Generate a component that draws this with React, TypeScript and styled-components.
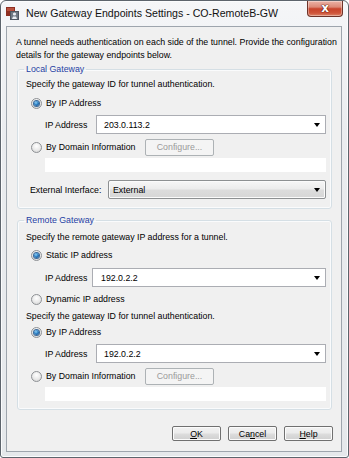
import React from 'react';
import styled, {createGlobalStyle, css} from 'styled-components';

const FONT = '8.8px';

const GlobalStyle = createGlobalStyle`
  html, body {
    margin: 0;
    padding: 0;
    background: #ffffff;
  }
  body {
    font-family: "Liberation Sans", Arial, sans-serif;
    color: #000;
  }
`

const Window = styled.div`
  width: 349px;
  height: 458px;
  box-sizing: border-box;
  border: 1px solid #5d646c;
  border-radius: 6px 6px 3px 3px;
  background: linear-gradient(180deg, #f5f6f8 0%, #eaecef 30%, #e5e8eb 100%);
  box-shadow: inset 0 0 0 1px #fbfcfd;
  display: flex;
  flex-direction: column;
  overflow: hidden;
`

const TitleBar = styled.div`
  height: 25px;
  flex-shrink: 0;
  display: flex;
  align-items: flex-start;
`

const TitleIcon = styled.svg`
  width: 13px;
  height: 13px;
  margin: 6px 0 0 5px;
  flex-shrink: 0;
`

const TitleText = styled.div`
  margin: 6px 0 0 7px;
  font-size: 10.6px;
  line-height: 13px;
  color: #111;
  white-space: nowrap;
`

const CloseButton = styled.div`
  margin-left: auto;
  margin-right: 5px;
  width: 36px;
  height: 16px;
  box-sizing: border-box;
  border: 1px solid #6e3329;
  border-top: none;
  border-radius: 0 0 4px 4px;
  background: linear-gradient(180deg, #ebb3a6 0%, #dc8a78 40%, #c8442c 52%, #cf553a 80%, #dc866b 100%);
  box-shadow: inset 0 0 0 1px rgba(255, 255, 255, 0.35);
  display: flex;
  align-items: center;
  justify-content: center;
  color: #fff;
  font-family: "DejaVu Sans", sans-serif;
  font-weight: bold;
  font-size: 12px;
  line-height: 1;
  padding-bottom: 2px;
  text-shadow: 0 0 1px #5a1a10, 0 0 1px #5a1a10, 0 0 1px #5a1a10;
`

const Panel = styled.div`
  flex: 1;
  margin: 0 6px 5px 5px;
  border: 1px solid #9ea5ad;
  background: #f0f0f0;
  display: flex;
  flex-direction: column;
`

const Intro = styled.div`
  padding: 9px 9px 0 9px;
  font-size: ${FONT};
  line-height: 13px;
  > span {
    display: block;
    white-space: nowrap;
  }
`

const Group = styled.fieldset<{ $top: number; $bottom: number }>`
  margin: ${p => p.$top}px 9px 0 10px;
  padding: 0 5px ${p => p.$bottom}px 8px;
  border: 1px solid #d5dfe5;
  border-radius: 3px;
  box-shadow: inset 0 0 0 1px #fafbfc;
  min-width: 0;
  display: flex;
  flex-direction: column;
`

const Legend = styled.legend`
  padding: 0 2px;
  margin-left: -2px;
  font-size: ${FONT};
  line-height: 13px;
  color: #1f3fa3;
`

const Text = styled.div<{ $top: number }>`
  margin-top: ${p => p.$top}px;
  font-size: ${FONT};
  line-height: 13px;
  white-space: nowrap;
`

const Row = styled.div<{ $top: number; $indent?: number }>`
  margin-top: ${p => p.$top}px;
  padding-left: ${p => p.$indent ?? 0}px;
  display: flex;
  align-items: center;
  font-size: ${FONT};
  white-space: nowrap;
`

const RadioRow = styled.label<{ $top: number }>`
  margin-top: ${p => p.$top}px;
  height: 16px;
  padding-left: 5px;
  display: flex;
  align-items: center;
  font-size: ${FONT};
  white-space: nowrap;
`

const RadioDot = styled.span<{ $checked?: boolean }>`
  width: 11px;
  height: 11px;
  box-sizing: border-box;
  border-radius: 50%;
  border: 1px solid #8e9195;
  background: radial-gradient(circle at 50% 35%, #ffffff 0%, #e9e9e9 55%, #cfcfcf 100%);
  margin-right: 4px;
  flex-shrink: 0;
  display: flex;
  align-items: center;
  justify-content: center;
  ${p => p.$checked && css`
    &::after {
      content: '';
      width: 5px;
      height: 5px;
      border-radius: 50%;
      background: radial-gradient(circle at 40% 35%, #8fd0f5 0%, #2b7fc4 45%, #133f78 100%);
      box-shadow: 0 0 0 1px #3d6a99;
    }
  `}
`

const RadioLabel = styled.span<{ $width?: number }>`
  display: inline-block;
  width: ${p => (p.$width ? `${p.$width}px` : 'auto')};
`

const FieldLabel = styled.span<{ $width: number }>`
  width: ${p => p.$width}px;
  flex-shrink: 0;
`

const Combo = styled.div<{ $raised?: boolean; $pad: number; $h: number }>`
  flex: 1;
  height: ${p => p.$h}px;
  box-sizing: border-box;
  padding-left: ${p => p.$pad}px;
  padding-right: 5px;
  display: flex;
  align-items: center;
  border: 1px solid #abadb3;
  background: #ffffff;
  ${p => p.$raised && css`
    border-color: #8d9092;
    border-radius: 2px;
    background: linear-gradient(180deg, #f7f7f7 0%, #ececec 45%, #dcdcdc 55%, #d6d6d6 100%);
    box-shadow: inset 0 0 0 1px #fbfbfb;
  `}
  > span:first-child {
    flex: 1;
  }
`

const Arrow = styled.span`
  width: 0;
  height: 0;
  border-left: 3.5px solid transparent;
  border-right: 3.5px solid transparent;
  border-top: 4px solid #000;
`

const ConfigureButton = styled.div`
  width: 69px;
  height: 17px;
  box-sizing: border-box;
  border: 1px solid #adb2b5;
  border-radius: 2px;
  background: #f4f4f4;
  color: #9a9a9a;
  display: flex;
  align-items: center;
  justify-content: center;
  font-size: ${FONT};
`

const BlankField = styled.div<{ $top: number }>`
  margin: ${p => p.$top}px 0 0 19px;
  height: 14px;
  background: #ffffff;
`

const ButtonBar = styled.div`
  margin: 16px 8px 0 0;
  display: flex;
  justify-content: flex-end;
  gap: 7px;
`

const Button = styled.div`
  width: 49px;
  height: 15px;
  box-sizing: border-box;
  border: 1px solid #707070;
  border-radius: 2px;
  background: linear-gradient(180deg, #f2f2f2 0%, #ebebeb 48%, #dddddd 52%, #cfcfcf 100%);
  box-shadow: inset 0 0 0 1px #fbfbfb;
  display: flex;
  align-items: center;
  justify-content: center;
  font-size: ${FONT};
  u {
    text-decoration: underline;
  }
`

function Radio({checked, label, width, top}: { checked?: boolean; label: string; width?: number; top: number }) {
  return (
    <RadioRow $top={top}>
      <RadioDot $checked={checked}/>
      <RadioLabel $width={width}>{label}</RadioLabel>
    </RadioRow>
  )
}

function IpRow({top, labelWidth, value, pad}: { top: number; labelWidth: number; value: string; pad: number }) {
  return (
    <Row $top={top} $indent={19}>
      <FieldLabel $width={labelWidth}>IP Address</FieldLabel>
      <Combo $pad={pad} $h={19}>
        <span>{value}</span>
        <Arrow/>
      </Combo>
    </Row>
  )
}

function DomainRow({top}: { top: number }) {
  return (
    <RadioRow $top={top}>
      <RadioDot/>
      <RadioLabel $width={99}>By Domain Information</RadioLabel>
      <ConfigureButton>Configure...</ConfigureButton>
    </RadioRow>
  )
}

export default function App() {
  return (
    <>
      <GlobalStyle/>
      <Window>
        <TitleBar>
          <TitleIcon viewBox="0 0 13 13">
            <rect x="0" y="0" width="9" height="9" fill="#8e2f22"/>
            <rect x="1" y="1" width="7" height="3" fill="#b9503c"/>
            <rect x="4" y="4" width="9" height="9" fill="#4f5761"/>
            <rect x="5" y="5" width="7" height="7" fill="#6f7883"/>
            <circle cx="8.5" cy="7" r="1.6" fill="#e9eef3"/>
            <path d="M6 12 L7 9.5 L10 9.5 L11 12 Z" fill="#e9eef3"/>
          </TitleIcon>
          <TitleText>New Gateway Endpoints Settings - CO-RemoteB-GW</TitleText>
          <CloseButton>x</CloseButton>
        </TitleBar>
        <Panel>
          <Intro>
            <span>A tunnel needs authentication on each side of the tunnel. Provide the configuration</span>
            <span>details for the gateway endpoints below.</span>
          </Intro>

          <Group $top={1} $bottom={9}>
            <Legend>Local Gateway</Legend>
            <Text $top={2}>Specify the gateway ID for tunnel authentication.</Text>
            <Radio top={4} checked label="By IP Address"/>
            <IpRow top={4} labelWidth={51} value="203.0.113.2" pad={7}/>
            <DomainRow top={5}/>
            <BlankField $top={3}/>
            <Row $top={8} $indent={4}>
              <FieldLabel $width={78}>External Interface:</FieldLabel>
              <Combo $raised $pad={4} $h={19}>
                <span>External</span>
                <Arrow/>
              </Combo>
            </Row>
          </Group>

          <Group $top={5} $bottom={8}>
            <Legend>Remote Gateway</Legend>
            <Text $top={4}>Specify the remote gateway IP address for a tunnel.</Text>
            <Radio top={3} checked label="Static IP address"/>
            <IpRow top={5} labelWidth={47} value="192.0.2.2" pad={8}/>
            <Radio top={4} label="Dynamic IP address"/>
            <Text $top={3}>Specify the gateway ID for tunnel authentication.</Text>
            <Radio top={1} checked label="By IP Address"/>
            <IpRow top={4} labelWidth={51} value="192.0.2.2" pad={7}/>
            <DomainRow top={5}/>
            <BlankField $top={3}/>
          </Group>

          <ButtonBar>
            <Button><u>O</u>K</Button>
            <Button>Ca<u>n</u>cel</Button>
            <Button><u>H</u>elp</Button>
          </ButtonBar>
        </Panel>
      </Window>
    </>
  )
}
